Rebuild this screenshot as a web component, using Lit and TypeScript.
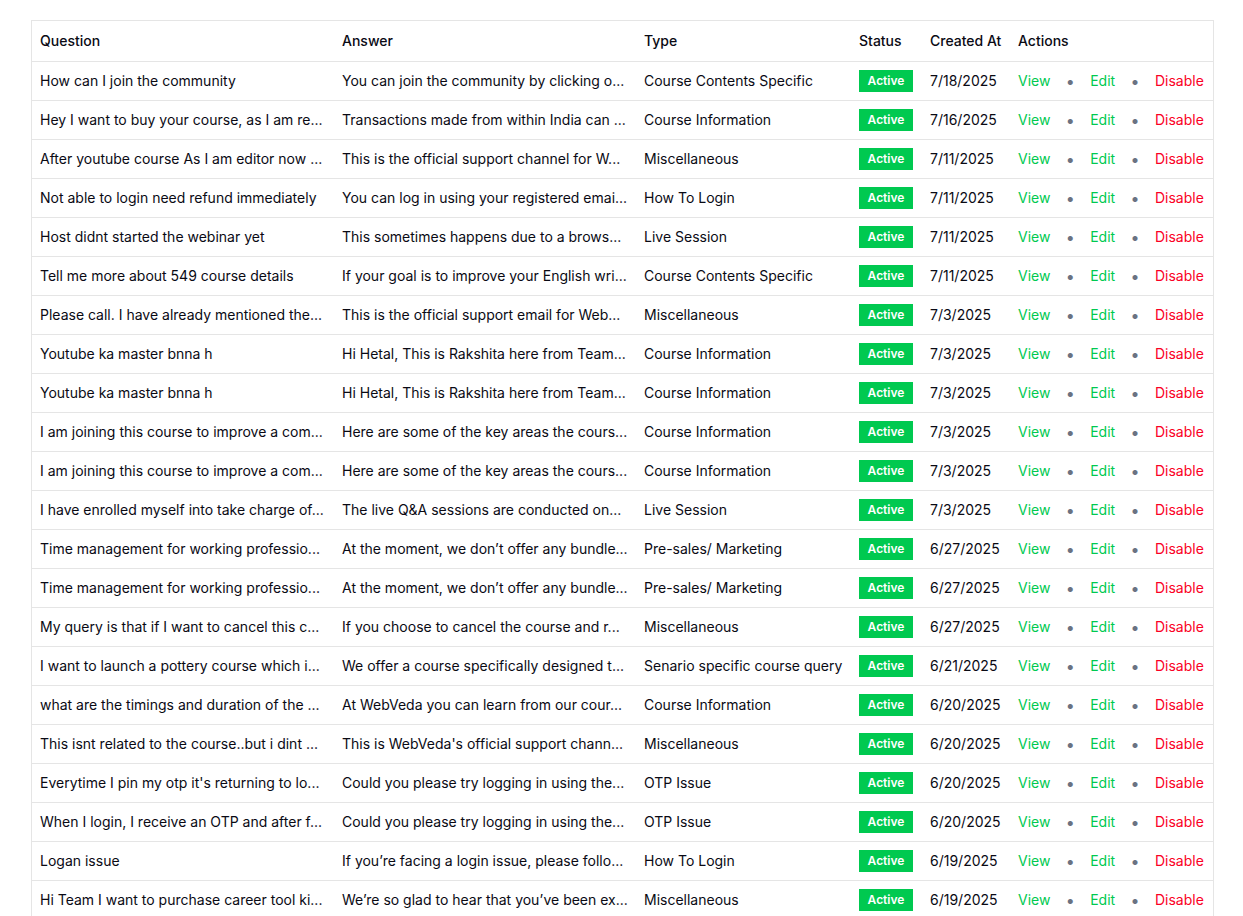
import { LitElement, html, css } from "lit";
import { customElement } from "lit/decorators.js";

const CI = "Course Information", MI = "Miscellaneous", CC = "Course Contents Specific", LS = "Live Session", HL = "How To Login", PS = "Pre-sales/ Marketing", OT = "OTP Issue";
const rows: [string, string, string, string][] = [
  ["How can I join the community", "You can join the community by clicking o...", CC, "7/18/2025"],
  ["Hey I want to buy your course, as I am re...", "Transactions made from within India can ...", CI, "7/16/2025"],
  ["After youtube course As I am editor now ...", "This is the official support channel for W...", MI, "7/11/2025"],
  ["Not able to login need refund immediately", "You can log in using your registered emai...", HL, "7/11/2025"],
  ["Host didnt started the webinar yet", "This sometimes happens due to a brows...", LS, "7/11/2025"],
  ["Tell me more about 549 course details", "If your goal is to improve your English wri...", CC, "7/11/2025"],
  ["Please call. I have already mentioned the...", "This is the official support email for Web...", MI, "7/3/2025"],
  ["Youtube ka master bnna h", "Hi Hetal, This is Rakshita here from Team...", CI, "7/3/2025"],
  ["Youtube ka master bnna h", "Hi Hetal, This is Rakshita here from Team...", CI, "7/3/2025"],
  ["I am joining this course to improve a com...", "Here are some of the key areas the cours...", CI, "7/3/2025"],
  ["I am joining this course to improve a com...", "Here are some of the key areas the cours...", CI, "7/3/2025"],
  ["I have enrolled myself into take charge of...", "The live Q&A sessions are conducted on...", LS, "7/3/2025"],
  ["Time management for working professio...", "At the moment, we don’t offer any bundle...", PS, "6/27/2025"],
  ["Time management for working professio...", "At the moment, we don’t offer any bundle...", PS, "6/27/2025"],
  ["My query is that if I want to cancel this c...", "If you choose to cancel the course and r...", MI, "6/27/2025"],
  ["I want to launch a pottery course which i...", "We offer a course specifically designed t...", "Senario specific course query", "6/21/2025"],
  ["what are the timings and duration of the ...", "At WebVeda you can learn from our cour...", CI, "6/20/2025"],
  ["This isnt related to the course..but i dint ...", "This is WebVeda's official support chann...", MI, "6/20/2025"],
  ["Everytime I pin my otp it's returning to lo...", "Could you please try logging in using the...", OT, "6/20/2025"],
  ["When I login, I receive an OTP and after f...", "Could you please try logging in using the...", OT, "6/20/2025"],
  ["Logan issue", "If you’re facing a login issue, please follo...", HL, "6/19/2025"],
  ["Hi Team I want to purchase career tool ki...", "We’re so glad to hear that you’ve been ex...", MI, "6/19/2025"],
];

@customElement("app-root")
export class AppRoot extends LitElement {
  static styles = css`
    :host {
      display: block;
      box-sizing: border-box;
      padding: 20px 29px 0 31px;
      font-family: Inter, "Liberation Sans", sans-serif;
      font-size: 14px;
      color: #0a0a14;
    }
    table {
      width: 1183px;
      border-collapse: separate;
      border-spacing: 0;
      table-layout: fixed;
      border: 1px solid #e5e5e5;
    }
    .c1, .c2 { width: 302px; }
    .c3 { width: 215px; }
    .c4 { width: 71px; }
    .c5 { width: 88px; }
    th, td {
      padding: 0 8px;
      text-align: left;
      white-space: nowrap;
      line-height: 20px;
      border-bottom: 1px solid #e5e5e5;
    }
    th { font-weight: 500; height: 40px; }
    td { height: 38px; }
    .badge {
      display: block;
      width: 54px;
      height: 22px;
      line-height: 22px;
      text-align: center;
      background: #00c950;
      color: #fff;
      font-size: 12px;
      font-weight: 600;
    }
    .actions { display: flex; align-items: center; gap: 17.9px; }
    .dot { width: 4px; display: flex; justify-content: center; color: #6a7282; font-size: 16px; }
    .green { color: #00c950; }
    .red { color: #fa0025; }
  `;

  render() {
    return html`
      <table>
        <colgroup>
          <col class="c1" /><col class="c2" /><col class="c3" /><col class="c4" /><col class="c5" /><col />
        </colgroup>
        <thead>
          <tr><th>Question</th><th>Answer</th><th>Type</th><th>Status</th><th>Created At</th><th>Actions</th></tr>
        </thead>
        <tbody>
          ${rows.map(
            ([q, a, t, d]) => html`
              <tr>
                <td>${q}</td>
                <td>${a}</td>
                <td>${t}</td>
                <td><span class="badge">Active</span></td>
                <td>${d}</td>
                <td>
                  <div class="actions">
                    <span class="green">View</span><span class="dot">•</span>
                    <span class="green">Edit</span><span class="dot">•</span>
                    <span class="red">Disable</span>
                  </div>
                </td>
              </tr>
            `
          )}
        </tbody>
      </table>
    `;
  }
}
